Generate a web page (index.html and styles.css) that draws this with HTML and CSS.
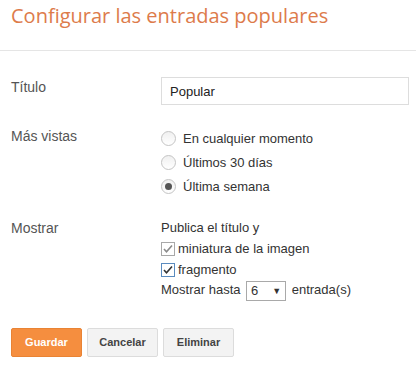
FILE: index.html
```html
<!DOCTYPE html>
<html lang="es">
<head>
    <meta charset="UTF-8">
    <title>Configurar las entradas populares</title>
    <link rel="stylesheet" href="styles.css">
</head>
<body>

    <!-- Header -->
    <div class="header">
        <h1>Configurar las entradas populares</h1>
    </div>

    <!-- Form -->
    <div class="form">
        <div class="row">
            <div class="label">Título</div>
            <div class="field">
                <input type="text" class="text-input" value="Popular">
            </div>
        </div>

        <div class="row row-top">
            <div class="label">Más vistas</div>
            <div class="field options">
                <label class="option"><span class="radio"></span>En cualquier momento</label>
                <label class="option"><span class="radio"></span>Últimos 30 días</label>
                <label class="option"><span class="radio checked"></span>Última semana</label>
            </div>
        </div>

        <div class="row row-show">
            <div class="label">Mostrar</div>
            <div class="field options">
                <div class="line">Publica el título y</div>
                <label class="option check">
                    <svg class="checkbox" width="14" height="14" viewBox="0 0 14 14">
                        <rect x="0.5" y="0.5" width="13" height="13" fill="#fff" stroke="#a8a8a8"/>
                        <path d="M3 7 L5.5 9.8 L11 3.5" fill="none" stroke="#8a8a8a" stroke-width="1.6"/>
                    </svg>miniatura de la imagen
                </label>
                <label class="option check">
                    <svg class="checkbox" width="14" height="14" viewBox="0 0 14 14">
                        <rect x="0.5" y="0.5" width="13" height="13" fill="#fff" stroke="#5a8bbf"/>
                        <path d="M3 7 L5.5 9.8 L11 3.5" fill="none" stroke="#333" stroke-width="1.6"/>
                    </svg>fragmento
                </label>
                <div class="line">
                    Mostrar hasta
                    <span class="select">6<span class="arrow">▼</span></span>
                    entrada(s)
                </div>
            </div>
        </div>
    </div>

    <!-- Buttons -->
    <div class="buttons">
        <a href="#" class="button button-orange">Guardar</a>
        <a href="#" class="button">Cancelar</a>
        <a href="#" class="button">Eliminar</a>
    </div>

</body>
</html>
```

FILE: styles.css
```css
body {
    margin: 0;
    padding: 0;
    background: #fff;
    font-family: "Liberation Sans", Arial, sans-serif;
    font-size: 13px;
    color: #444;
}

/* Header with title */
.header {
    height: 50px;
    border-bottom: 1px solid #e5e5e5;
    padding: 0 11px;
}

.header h1 {
    margin: 0;
    padding-top: 1px;
    font-family: "Open Sans", sans-serif;
    font-weight: normal;
    font-size: 20px;
    line-height: 30px;
    color: #dd7b4b;
}

.form {
    padding: 26px 11px 0;
}

.row {
    display: flex;
    align-items: flex-start;
}

.row-top {
    margin-top: 21px;
}

.row-show {
    margin-top: 20px;
}

.label {
    width: 150px;
    flex-shrink: 0;
    font-size: 14px;
    line-height: 20px;
    color: #555;
}

.field {
    flex: 1;
}

.text-input {
    box-sizing: border-box;
    width: 248px;
    height: 28px;
    border: 1px solid #ddd;
    padding: 0 8px;
    font-family: "Liberation Sans", Arial, sans-serif;
    font-size: 13px;
    color: #222;
    outline: none;
}

.options {
    display: flex;
    flex-direction: column;
}

.option {
    display: flex;
    align-items: center;
    height: 24px;
    color: #333;
}

.line {
    height: 20px;
    line-height: 20px;
    color: #333;
}

/* Radio buttons */
.radio {
    box-sizing: border-box;
    width: 15px;
    height: 15px;
    margin-right: 7px;
    border: 1px solid #c4c4c4;
    border-radius: 50%;
    background: linear-gradient(#f0f0f0, #fff);
    display: flex;
    align-items: center;
    justify-content: center;
}

.radio.checked::after {
    content: "";
    width: 7px;
    height: 7px;
    border-radius: 50%;
    background: #555;
}

/* Checkboxes */
.check {
    height: 21px;
}

.checkbox {
    margin-right: 3px;
}

/* Fake select */
.select {
    display: inline-flex;
    align-items: center;
    justify-content: space-between;
    box-sizing: border-box;
    width: 40px;
    height: 20px;
    margin: 0 2px;
    padding: 0 4px;
    border: 1px solid #a9a9a9;
    background: #fff;
    vertical-align: middle;
}

.arrow {
    font-size: 9px;
}

/* Buttons */
.buttons {
    display: flex;
    gap: 5px;
    padding: 28px 11px 0;
}

.button {
    box-sizing: border-box;
    width: 71px;
    height: 29px;
    line-height: 27px;
    border: 1px solid #dcdcdc;
    border-radius: 2px;
    background: #f3f3f3;
    color: #444;
    font-size: 11px;
    font-weight: bold;
    text-align: center;
    text-decoration: none;
}

.button-orange {
    background: #f58e3f;
    border-color: #e98334;
    color: #fff;
}
```
